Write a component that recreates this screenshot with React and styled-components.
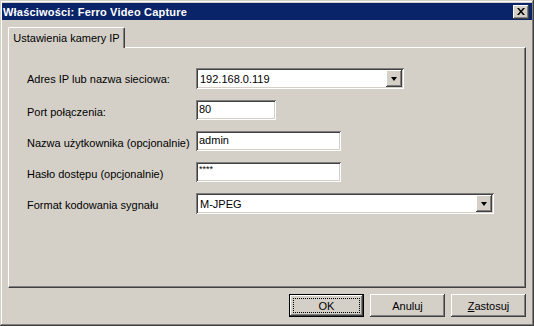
import React from "react"
import styled, { createGlobalStyle } from "styled-components"

const GlobalStyle = createGlobalStyle`
    html, body {
        margin: 0;
        padding: 0;
        background: #d4d0c8;
    }
    body {
        font-family: 'Liberation Sans', Arial, sans-serif;
        font-size: 11px;
        color: #000;
    }
`

const raised = `
    box-shadow: inset -1px -1px #404040, inset 1px 1px #fff, inset -2px -2px #808080, inset 2px 2px #d4d0c8;
`
const sunken = `
    box-shadow: inset 1px 1px #808080, inset -1px -1px #fff, inset 2px 2px #404040, inset -2px -2px #d4d0c8;
`

const Window = styled.div`
    box-sizing: border-box;
    width: 534px;
    height: 326px;
    padding: 3px 2px 2px 2px;
    background: #d4d0c8;
    box-shadow: inset -1px -1px #404040, inset 1px 1px #d4d0c8, inset -2px -2px #808080, inset 2px 2px #fff;
    display: flex;
    flex-direction: column;
`
const TitleBar = styled.div`
    height: 17px;
    background: #0a246a;
    display: flex;
    align-items: center;
    justify-content: space-between;
    padding: 0 3px 0 1px;
`
const Title = styled.span`
    color: #fff;
    font-weight: bold;
    font-size: 11px;
    letter-spacing: 0.2px;
`
const CloseButton = styled.div`
    width: 16px;
    height: 14px;
    background: #d4d0c8;
    ${raised}
    display: flex;
    align-items: center;
    justify-content: center;
`
const Body = styled.div`
    flex: 1;
    display: flex;
    flex-direction: column;
    padding: 7px 6px 6px 6px;
`
const TabStrip = styled.div`
    display: flex;
    height: 20px;
    align-items: flex-end;
`
const Tab = styled.div`
    box-sizing: border-box;
    width: 117px;
    height: 21px;
    margin-bottom: -1px;
    display: flex;
    align-items: center;
    justify-content: center;
    white-space: nowrap;
    background: #d4d0c8;
    border-top: 1px solid #fff;
    border-left: 1px solid #fff;
    border-right: 1px solid #404040;
    box-shadow: inset -1px 0 #808080;
    border-top-left-radius: 2px;
    border-top-right-radius: 2px;
    position: relative;
    z-index: 1;
`
const Panel = styled.div`
    box-sizing: border-box;
    height: 241px;
    border-top: 1px solid #fff;
    border-left: 1px solid #fff;
    border-right: 1px solid #404040;
    border-bottom: 1px solid #404040;
    box-shadow: inset -1px -1px #808080;
    padding: 20px 0 0 18px;
`
const Form = styled.div`
    display: grid;
    grid-template-columns: 169px auto;
    row-gap: 11px;
    align-items: center;
    justify-items: start;
`
const Label = styled.div`
    white-space: nowrap;
    padding-top: ${p => p.$drop || 0}px;
`
const Field = styled.div`
    box-sizing: border-box;
    width: ${p => p.$w}px;
    height: 20px;
    background: #fff;
    ${sunken}
    padding: 0 3px 2px 3px;
    display: flex;
    align-items: center;
    font-size: ${p => p.$small ? 9 : 11}px;
    ${p => p.$small && "align-items: flex-start; padding-top: 2px;"}
`
const Combo = styled.div`
    box-sizing: border-box;
    width: ${p => p.$w}px;
    height: 21px;
    background: #fff;
    ${sunken}
    padding: 2px 2px 2px 4px;
    display: flex;
    align-items: center;
    justify-content: space-between;
`
const DropButton = styled.div`
    width: 16px;
    height: 17px;
    background: #d4d0c8;
    ${raised}
    display: flex;
    align-items: center;
    justify-content: center;
`
const Arrow = styled.div`
    width: 0;
    height: 0;
    border-left: 3.5px solid transparent;
    border-right: 3.5px solid transparent;
    border-top: 4px solid #000;
    margin-top: 1px;
`
const ButtonRow = styled.div`
    display: flex;
    justify-content: flex-end;
    gap: 6px;
    margin-top: 6px;
`
const Button = styled.div`
    box-sizing: border-box;
    width: 75px;
    height: 23px;
    background: #d4d0c8;
    display: flex;
    align-items: center;
    justify-content: center;
    position: relative;
    ${p => p.$default
        ? "box-shadow: inset 0 0 0 1px #000, inset -2px -2px #404040, inset 2px 2px #fff, inset -3px -3px #808080;"
        : raised}
`
const Focus = styled.div`
    position: absolute;
    inset: 4px;
    border: 1px dotted #000;
`
const Accel = styled.span`
    text-decoration: underline;
`

const App = () => {
    return (
        <>
            <GlobalStyle />
            <Window>
                <TitleBar>
                    <Title>Właściwości: Ferro Video Capture</Title>
                    <CloseButton>
                        <svg width="8" height="7" viewBox="0 0 8 7">
                            <path d="M0 0h2l2 2.5L6 0h2L5 3.5 8 7H6L4 4.5 2 7H0l3-3.5z" fill="#000" />
                        </svg>
                    </CloseButton>
                </TitleBar>
                <Body>
                    <TabStrip>
                        <Tab>Ustawienia kamery IP</Tab>
                    </TabStrip>
                    <Panel>
                        <Form>
                            <Label>Adres IP lub nazwa sieciowa:</Label>
                            <Combo $w={208}>
                                <span>192.168.0.119</span>
                                <DropButton><Arrow /></DropButton>
                            </Combo>
                            <Label $drop={4}>Port połączenia:</Label>
                            <Field $w={80}>80</Field>
                            <Label $drop={3}>Nazwa użytkownika (opcjonalnie)</Label>
                            <Field $w={145}>admin</Field>
                            <Label $drop={3}>Hasło dostępu (opcjonalnie)</Label>
                            <Field $w={145} $small>****</Field>
                            <Label $drop={2}>Format kodowania sygnału</Label>
                            <Combo $w={298}>
                                <span>M-JPEG</span>
                                <DropButton><Arrow /></DropButton>
                            </Combo>
                        </Form>
                    </Panel>
                    <ButtonRow>
                        <Button $default><Focus />OK</Button>
                        <Button>Anuluj</Button>
                        <Button><span><Accel>Z</Accel>astosuj</span></Button>
                    </ButtonRow>
                </Body>
            </Window>
        </>
    )
}

export default App
